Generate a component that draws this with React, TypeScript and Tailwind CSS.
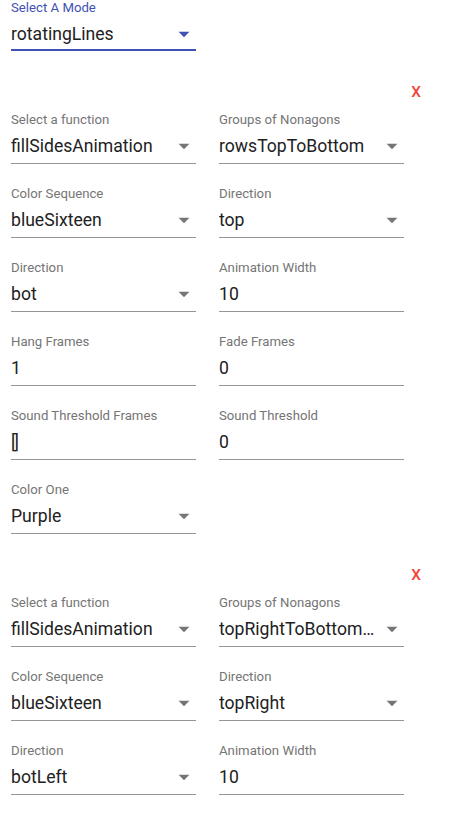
import React from "react";

const font = { fontFamily: "Roboto, 'Liberation Sans', sans-serif" };

function Arrow({ blue }: { blue?: boolean }) {
  return (
    <svg width="26" height="26" viewBox="0 0 24 24" className="absolute right-[-1px] top-[-4px]">
      <path d="M7 10l5 5 5-5z" fill={blue ? "#3f51b5" : "#757575"} />
    </svg>
  );
}

function Field({ label, value, select }: { label: string; value: string; select?: boolean }) {
  return (
    <div className="flex w-[185px] flex-col">
      <div className="h-[14px] text-[13.2px] leading-[14px] text-[#757575]">{label}</div>
      <div className="relative mt-[10px] h-[19px] pr-[26px]">
        <div className="truncate text-[17.6px] leading-[19px] text-[#212121]">{value}</div>
        {select && <Arrow />}
      </div>
      <div className="mt-[7px] h-px bg-[#949494]" />
    </div>
  );
}

function Row({ children }: { children: React.ReactNode }) {
  return <div className="flex gap-[23px]">{children}</div>;
}

function XButton() {
  return (
    <div className="flex h-[20px] justify-end pr-[39px]">
      <span className="text-[15.4px] font-medium leading-[20px] text-[#f44336]">X</span>
    </div>
  );
}

export default function App() {
  return (
    <div className="min-h-[818px] w-[460px] bg-white pl-[11px] pt-[1px]" style={font}>
      <div className="flex w-[185px] flex-col">
        <div className="h-[14px] text-[13.2px] leading-[14px] text-[#3f51b5]">Select A Mode</div>
        <div className="relative mt-[10px] h-[19px]">
          <div className="text-[17.6px] leading-[19px] text-[#212121]">rotatingLines</div>
          <Arrow blue />
        </div>
        <div className="mt-[5px] h-[2px] bg-[#3f51b5]" />
      </div>

      <div className="mt-[31px]">
        <XButton />
        <div className="mt-[11px] flex flex-col gap-[23px]">
          <Row>
            <Field label="Select a function" value="fillSidesAnimation" select />
            <Field label="Groups of Nonagons" value="rowsTopToBottom" select />
          </Row>
          <Row>
            <Field label="Color Sequence" value="blueSixteen" select />
            <Field label="Direction" value="top" select />
          </Row>
          <Row>
            <Field label="Direction" value="bot" select />
            <Field label="Animation Width" value="10" />
          </Row>
          <Row>
            <Field label="Hang Frames" value="1" />
            <Field label="Fade Frames" value="0" />
          </Row>
          <Row>
            <div className="flex w-[185px] flex-col">
              <div className="h-[14px] text-[13.2px] leading-[14px] text-[#757575]">Sound Threshold Frames</div>
              <div className="relative mt-[10px] h-[19px]">
                <div className="text-[17.6px] leading-[19px] tracking-[-1.5px] text-[#212121]">[]</div>
              </div>
              <div className="mt-[7px] h-px bg-[#949494]" />
            </div>
            <Field label="Sound Threshold" value="0" />
          </Row>
          <Row>
            <Field label="Color One" value="Purple" select />
          </Row>
        </div>
      </div>

      <div className="mt-[31px]">
        <XButton />
        <div className="mt-[11px] flex flex-col gap-[23px]">
          <Row>
            <Field label="Select a function" value="fillSidesAnimation" select />
            <Field label="Groups of Nonagons" value="topRightToBottomLeft" select />
          </Row>
          <Row>
            <Field label="Color Sequence" value="blueSixteen" select />
            <Field label="Direction" value="topRight" select />
          </Row>
          <Row>
            <Field label="Direction" value="botLeft" select />
            <Field label="Animation Width" value="10" />
          </Row>
        </div>
      </div>
    </div>
  );
}
